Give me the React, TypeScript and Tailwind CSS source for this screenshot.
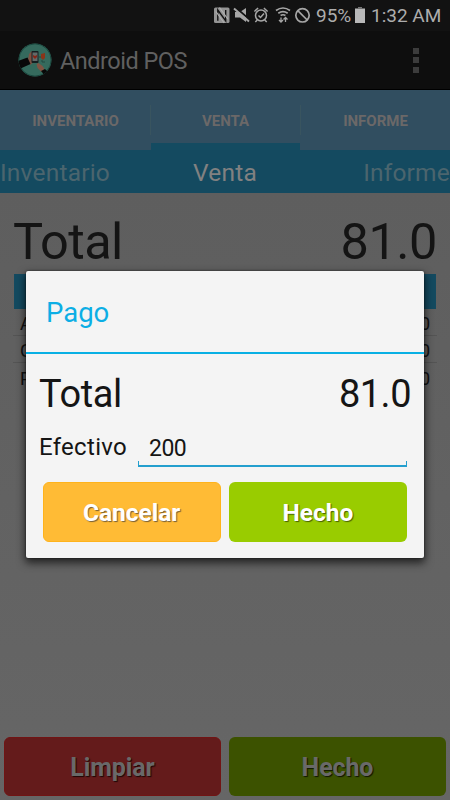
import React from "react";

function StatusBar() {
  return (
    <div className="flex h-[31px] items-center bg-[#121212] text-[#adadad]">
      <svg className="block h-[31px] w-[313px] shrink-0" viewBox="0 0 313 31" fill="none">
        <rect x="214" y="7.500" width="15.500" height="15.500" rx="1.500" fill="#949494" />
        <path d="M217.800 20.800V10l7.900 10.800V10" stroke="#121212" strokeWidth="1.400" />
        <path d="M219.500 7.500l8.300 11.500M224.200 23l-8.300-11.500" stroke="#b0b0b0" strokeWidth="1.200" />
        <path d="M235 12h5l6-4v14l-6-4.500h-5z" fill="#a6a6a6" />
        <path d="M235 7l15 13" stroke="#121212" strokeWidth="2" />
        <path d="M234 8.500l15 13" stroke="#a6a6a6" strokeWidth="2" />
        <circle cx="261" cy="15.500" r="5.500" stroke="#a6a6a6" strokeWidth="1.500" />
        <path d="M254.400 11.500l3.700-3.500M267.600 11.500L263.900 8M257.300 20l-2 2M264.700 20l2 2M258.500 15.500l2 2 3.500-4" stroke="#a6a6a6" strokeWidth="1.500" />
        <path d="M276 10.500q7-5 14 0M278.300 13.200q4.700-3.200 9.400 0M280.600 15.500q2.400-1.500 4.800 0" stroke="#a6a6a6" strokeWidth="1.700" />
        <path d="M281 17.500v4M279 20l2 2 2-2M285.500 22v-4M283.500 19.500l2-2 2 2" stroke="#a6a6a6" strokeWidth="1.300" />
        <circle cx="302.500" cy="15.300" r="6.700" stroke="#a6a6a6" strokeWidth="1.700" />
        <path d="M297.800 10.600l9.400 9.400" stroke="#a6a6a6" strokeWidth="1.700" />
      </svg>
      <span className="w-[42px] shrink-0 whitespace-nowrap pl-[3px] text-[19px] leading-[31px]">95%</span>
      <svg className="block h-[31px] w-[12px] shrink-0" viewBox="0 0 12 31">
        <path d="M0 8.500h10V23H0z" fill="#b8b8b8" />
        <path d="M3 7h4v1.500H3z" fill="#777" />
      </svg>
      <span className="whitespace-nowrap pl-[4px] text-[19px] leading-[31px]">1:32 AM</span>
    </div>
  );
}

function Logo() {
  return (
    <svg className="block size-[34px] shrink-0" viewBox="0 0 34 34">
      <clipPath id="logo-disc"><circle cx="17" cy="17" r="16.500" /></clipPath>
      <circle cx="17" cy="17" r="16.500" fill="#356a5d" />
      <g clipPath="url(#logo-disc)">
        <circle cx="17" cy="17" r="16.200" fill="none" stroke="#19483f" strokeWidth="1" />
        <path d="M10 17l1-6 3-3 2 2v9l-4 3z" fill="#7d5142" />
        <path d="M0 18l9.500-3.500 3 6.500-11 5z" fill="#080808" />
        <rect x="13.500" y="8" width="7" height="12" rx="1" fill="#161e20" />
        <rect x="14.500" y="9.500" width="5" height="8.500" fill="#626968" />
        <path d="M15 12l2 1 2-1v2l-2 2-2-2z" fill="#862516" />
        <path d="M23 11l4-1v5l-2 2-2-2z" fill="#8a3519" />
        <path d="M24 17v2h3M21 14h2" fill="none" stroke="#224840" />
        <path d="M18.500 21l2-1 4 3 2 3-3 3-4-4z" fill="#805443" />
        <path d="M23 28l4-2 4 4-3 4z" fill="#080808" />
      </g>
    </svg>
  );
}

function ActionBar() {
  return (
    <header className="flex h-[59px] items-center border-b border-black bg-[#0e0e0e] pl-[18px] pr-[31px]">
      <Logo />
      <h1 className="ml-[8px] flex-1 pt-[2px] text-[23.500px] leading-[30px] tracking-[-0.500px] text-[#606060]">Android POS</h1>
      <div className="flex flex-col gap-[3.500px]">
        <i className="block size-[6px] bg-[#3c3c3c]" />
        <i className="block size-[6px] bg-[#3c3c3c]" />
        <i className="block size-[6px] bg-[#3c3c3c]" />
      </div>
    </header>
  );
}

function Tabs() {
  return (
    <nav className="flex h-[60px] bg-[#314e60] text-center text-[15px] font-bold leading-[62px] text-[#6b6868]">
      <span className="w-[151px]">INVENTARIO</span>
      <i className="my-[15px] -ml-px w-px bg-[#39545f]" />
      <span className="w-[149px] border-b-[7px] border-[#144b61]">VENTA</span>
      <i className="my-[15px] w-px bg-[#39545f]" />
      <span className="flex-1">INFORME</span>
    </nav>
  );
}

function Background() {
  return (
    <main className="flex flex-1 flex-col bg-linear-to-b from-[#5e5e5e] to-[#666666] px-[4px] pb-[4px]">
      <div className="flex h-[81px] items-center justify-between px-[9px] pt-[17px] text-[50.500px] leading-[60px] text-[#141414]">
        <span className="tracking-[-0.600px]">Total</span>
        <span className="tracking-[-0.500px]">81.0</span>
      </div>
      <div className="mx-[10px] h-[34.500px] bg-[#144a60]" />
      <div className="mx-[9px] text-[18px] text-[#111]">
        {["A", "C", "P"].map((name, i) => (
          <div
            key={name}
            className={
              i < 2
                ? "flex h-[27.300px] items-center justify-between border-b border-[#545454] px-[7px] pt-[4px]"
                : "flex h-[27.300px] items-center justify-between px-[7px] pt-[3px]"
            }
          >
            <span>{name}</span>
            <span>0</span>
          </div>
        ))}
      </div>
      <div className="mt-auto grid h-[59.500px] grid-cols-2 gap-[8px] text-center text-[25px] font-bold leading-[58px] text-[#696969]">
        <button className="rounded-[6px] border border-[#711414] bg-[#641b1b] pt-[2px] leading-[55px] tracking-[-0.100px] text-shadow-[1px_1px_1px_#1e0707]">Limpiar</button>
        <button className="rounded-[6px] bg-[#3c5200] pt-[2px] leading-[57px] tracking-[-0.100px] text-shadow-[1px_1px_1px_#101600]">Hecho</button>
      </div>
    </main>
  );
}

function PaymentDialog() {
  return (
    <section
      role="dialog"
      className="absolute left-[26px] top-[271px] flex h-[287px] w-[398px] flex-col rounded-[2px] bg-[#f4f4f4] shadow-[0_4px_9px_1px_rgba(0,0,0,0.65),0_0_2px_0px_rgba(0,0,0,0.65)]"
    >
      <h2 className="h-[82.500px] border-b-[2.500px] border-[#09b0e4] pl-[20px] text-[27.500px] leading-[83px] text-[#0caee5]">Pago</h2>
      <div className="flex h-[80px] items-center justify-between px-[13px] text-[38px] leading-[80px] text-[#151515]">
        <span className="tracking-[-0.400px]">Total</span>
        <span className="tracking-[-0.500px]">81.0</span>
      </div>
      <div className="flex h-[34px] pl-[13px] pr-[17px] text-[24px] leading-[27px] text-[#151515]">
        <label htmlFor="cash" className="w-[99px] tracking-[0.300px]">Efectivo</label>
        <div className="flex flex-1 flex-col">
          <input id="cash" readOnly value="200" className="h-[28px] w-full bg-transparent pl-[11px] pt-px text-[23px] tracking-[-0.500px] outline-none" />
          <i className="-mt-[1px] block h-[6px] border-x border-b-2 border-[#249fce]" />
        </div>
      </div>
      <div className="mt-[14.500px] grid h-[59.500px] grid-cols-2 gap-[8px] pl-[16.500px] pr-[17px] text-center text-[24.500px] font-bold text-white">
        <button className="rounded-[6px] border border-[#ffb31b] bg-[#ffbb35] pt-[2px] leading-[55px] text-shadow-[1px_1px_1px_#776039]">Cancelar</button>
        <button className="rounded-[6px] bg-[#9c0] pt-[2px] leading-[57px] text-shadow-[1px_1px_1px_#476100]">Hecho</button>
      </div>
    </section>
  );
}

export default function App() {
  return (
    <div className="relative flex h-[800px] w-[450px] flex-col overflow-hidden font-[Roboto,sans-serif]">
      <StatusBar />
      <ActionBar />
      <Tabs />
      <div className="grid h-[43px] grid-cols-3 bg-[#144a60] text-[24.500px] leading-[46px] text-[#4b656e]">
        <span className="tracking-[0.200px]">Inventario</span>
        <span className="text-center tracking-[0.200px] text-[#818181]">Venta</span>
        <span className="text-right tracking-[0.200px]">Informe</span>
      </div>
      <Background />
      <PaymentDialog />
    </div>
  );
}
